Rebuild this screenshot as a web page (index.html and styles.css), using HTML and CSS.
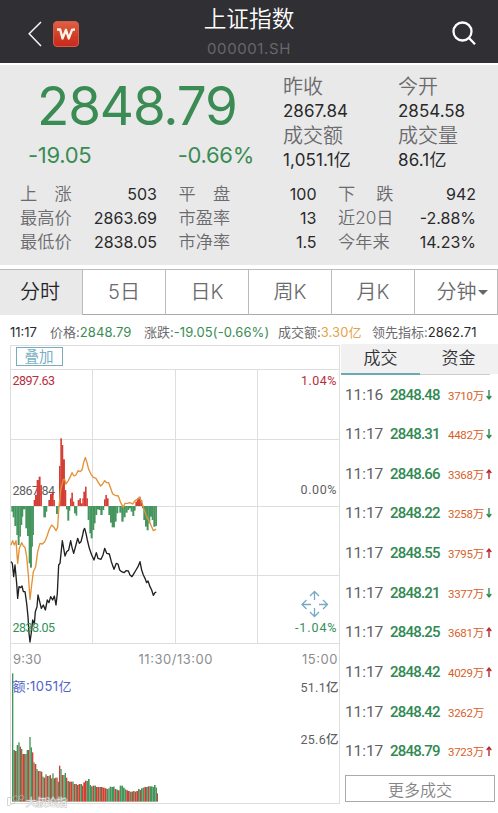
FILE: index.html
```html
<!DOCTYPE html>
<html lang="zh-CN">
<head>
<meta charset="utf-8">
<title>上证指数</title>
<link rel="stylesheet" href="styles.css">
</head>
<body>
<header class="bar">
  <div class="bar-left">
    <svg class="back" viewBox="0 0 14 26"><path d="M13 1 1.2 12.7 13 25"/></svg>
    <svg class="brand" viewBox="0 0 26 26"><defs><linearGradient id="red" x2="0" y2="1"><stop stop-color="#df6146"/><stop offset=".6" stop-color="#d03b25"/><stop offset="1" stop-color="#ca281d"/></linearGradient></defs><rect x=".5" y=".5" width="25" height="25" rx="3.5" fill="url(#red)" stroke="#d55b48"/><path d="M4 8.5H7.2L9.5 17.5 13 8.8 15.7 17.5 19 8.8Q19.5 8.5 22 8.5" fill="none" stroke="#fff4e6" stroke-width="2.3" stroke-linejoin="round"/></svg>
  </div>
  <div class="heading"><h1>上证指数</h1><p>000001.SH</p></div>
  <svg class="search" viewBox="0 0 24 25"><circle cx="10.5" cy="10.5" r="9"/><path d="m17 17 6 6.3"/></svg>
</header>

<section class="quote">
  <div class="top">
    <div class="last">
      <div class="price">2848.79</div>
      <div class="change"><span>-19.05</span><span>-0.66%</span></div>
    </div>
    <dl class="pair"><dt>昨收</dt><dd>2867.84</dd><dt>成交额</dt><dd>1,051.1亿</dd></dl>
    <dl class="pair"><dt>今开</dt><dd>2854.58</dd><dt>成交量</dt><dd>86.1亿</dd></dl>
  </div>
  <div class="stats">
    <dl><dt class="wide"><i>上</i><i>涨</i></dt><dd>503</dd><dt>最高价</dt><dd>2863.69</dd><dt>最低价</dt><dd>2838.05</dd></dl>
    <dl><dt class="wide"><i>平</i><i>盘</i></dt><dd>100</dd><dt>市盈率</dt><dd>13</dd><dt>市净率</dt><dd>1.5</dd></dl>
    <dl><dt class="wide"><i>下</i><i>跌</i></dt><dd>942</dd><dt>近20日</dt><dd>-2.88%</dd><dt>今年来</dt><dd>14.23%</dd></dl>
  </div>
</section>

<nav class="tabs"><b>分时</b><span>5日</span><span>日K</span><span>周K</span><span>月K</span><span class="more-tab">分钟<i></i></span></nav>

<div class="ticker">
  <span class="dark">11:17</span>
  <span>价格:<em>2848.79</em></span>
  <span>涨跌:<em>-19.05(-0.66%)</em></span>
  <span>成交额:<em class="gold">3.30亿</em></span>
  <span class="lead">领先指标:<em class="dark">2862.71</em></span>
</div>

<main class="board">
  <svg class="chart" viewBox="10 344 330 469">
    <path class="grid" d="M10.5 804V345.5H340M10 369.5H340M10 439.5H340M10 506.500H340M10 575.500H340M10 643.500H340M10 803.500H340M339.500 345V804M92.500 370V643M175.500 370V643M257.500 370V643"/>
    <rect class="overlay-box" x="16.500" y="347.500" width="46" height="18"/>
    <text class="overlay-text" x="24.500" y="361.500" textLength="29">叠加</text>
    <text class="axis mid" x="12.500" y="495" textLength="42.500">2867.84</text>
    <g transform="translate(0 420) scale(.33333)">
      <g id="power"></g>
      <polyline class="line orange" points="33,375 38,362 43,375 48,362 53,430 58,385 65,368 70,378 75,382 80,410 85,465 90,538 95,495 100,455 107,440 113,395 120,370 127,372 134,365 140,352 147,330 155,315 162,322 168,332 173,322 176,270 182,210 186,195 190,178 194,178 198,192 205,182 211,170 216,158 222,168 228,165 234,152 240,155 246,150 251,128 256,112 261,128 266,148 273,163 280,172 288,175 295,188 302,198 308,192 314,182 320,188 326,188 332,205 338,222 346,226 355,228 362,248 370,262 375,250 382,250 390,248 398,252 405,242 412,238 419,233 425,245 432,268 440,290 448,305 454,318 460,332 468,328"/>
      <polyline class="line black" points="33,425 37,430 41,470 45,435 50,490 53,535 57,500 62,503 66,498 70,515 75,515 80,550 84,590 87,640 90,666 95,630 98,600 103,612 106,575 111,560 114,525 119,545 124,565 130,555 136,570 142,540 147,548 152,530 158,540 163,528 168,555 172,520 176,435 180,430 187,362 191,385 195,408 200,395 206,390 212,362 216,382 221,400 227,378 233,355 238,370 243,365 248,345 251,330 254,325 258,340 262,360 268,385 275,405 282,420 289,398 294,415 303,418 309,405 314,385 320,400 328,402 334,425 342,448 349,430 354,432 359,450 365,455 372,458 378,452 385,453 390,465 396,470 402,460 408,450 414,440 420,425 425,450 430,465 435,475 440,488 444,483 450,500 455,510 460,526 465,518 469,516"/>
    </g>
    <g id="volume" transform="translate(0 665) scale(.33333)"></g>
    <text class="axis up" x="12.500" y="385" textLength="42.500">2897.63</text>
    <text class="axis up" x="301" y="385" textLength="35.500">1.04%</text>
    <text class="axis mid" x="300.500" y="494" textLength="36">0.00%</text>
    <text class="axis down" x="12.500" y="632" textLength="42.500">2838.05</text>
    <text class="axis down" x="295" y="632" textLength="41.500">-1.04%</text>
    <text class="clock" x="13" y="664" textLength="28.500">9:30</text>
    <text class="clock" x="138.500" y="664" textLength="74">11:30/13:00</text>
    <text class="clock" x="302" y="664" textLength="35.500">15:00</text>
    <text class="total" x="12.500" y="691" textLength="59">额:1051亿</text>
    <text class="axis mid" x="300.500" y="692" textLength="38">51.1亿</text>
    <text class="axis mid" x="300.500" y="743.500" textLength="38">25.6亿</text>
    <path class="move" d="M314.500 600V591.500M310 596l4.500-4.500 4.500 4.500M314.500 608v8.500M310 612l4.500 4.500 4.500-4.500M311 604.500H302M306.500 600l-4.500 4.500 4.500 4.500M319 604.500h8.500M323 600l4.500 4.500-4.500 4.500"/>
    <g class="mark"><path d="M8 797.500h5M7.500 797.500v8h2l2-1.500q4 0 4-3"/><circle cx="16" cy="798.500" r="2.800"/><circle cx="21.500" cy="797.500" r="2.300"/><text x="26" y="805.500" textLength="41">大叔论指</text></g>
  </svg>

  <aside class="trades">
    <div class="trade-tabs"><b>成交</b><span>资金</span></div>
    <ul>
      <li><time>11:16</time><b>2848.48</b><span>3710万</span><svg class="dn" viewBox="0 0 6 10"><path d="M3 0V9M.7 6 3 8.800 5.300 6"/></svg></li>
      <li><time>11:17</time><b>2848.31</b><span>4482万</span><svg class="dn" viewBox="0 0 6 10"><path d="M3 0V9M.7 6 3 8.800 5.300 6"/></svg></li>
      <li><time>11:17</time><b>2848.66</b><span>3368万</span><svg class="rise" viewBox="0 0 6 10"><path d="M3 10V1M.7 4 3 1.200 5.300 4"/></svg></li>
      <li><time>11:17</time><b>2848.22</b><span>3258万</span><svg class="dn" viewBox="0 0 6 10"><path d="M3 0V9M.7 6 3 8.800 5.300 6"/></svg></li>
      <li><time>11:17</time><b>2848.55</b><span>3795万</span><svg class="rise" viewBox="0 0 6 10"><path d="M3 10V1M.7 4 3 1.200 5.300 4"/></svg></li>
      <li><time>11:17</time><b>2848.21</b><span>3377万</span><svg class="dn" viewBox="0 0 6 10"><path d="M3 0V9M.7 6 3 8.800 5.300 6"/></svg></li>
      <li><time>11:17</time><b>2848.25</b><span>3681万</span><svg class="rise" viewBox="0 0 6 10"><path d="M3 10V1M.7 4 3 1.200 5.300 4"/></svg></li>
      <li><time>11:17</time><b>2848.42</b><span>4029万</span><svg class="rise" viewBox="0 0 6 10"><path d="M3 10V1M.7 4 3 1.200 5.300 4"/></svg></li>
      <li><time>11:17</time><b>2848.42</b><span>3262万</span></li>
      <li><time>11:17</time><b>2848.79</b><span>3723万</span><svg class="rise" viewBox="0 0 6 10"><path d="M3 10V1M.7 4 3 1.200 5.300 4"/></svg></li>
    </ul>
    <button class="more">更多成交</button>
  </aside>
</main>
<script src="chart.js"></script>
</body>
</html>
```
FILE: styles.css
```css
* { box-sizing: border-box; margin: 0; padding: 0; }
body { width: 498px; height: 813px; overflow: hidden; background: #fff; color: #6b6b6e; font-family: Inter, "Noto Sans CJK SC", sans-serif; font-weight: 400; }
i, em { font-style: normal; }
.bar { height: 62.500px; background: #302f34; display: grid; grid-template-columns: 150px 1fr 150px; align-items: start; }
.bar-left { display: flex; align-items: center; gap: 11px; padding: 21px 0 0 28px; }
.back { width: 14px; height: 26px; fill: none; stroke: #f5f5f7; stroke-width: 1.500; }
.brand { width: 26px; height: 26px; }
.heading { text-align: center; }
.heading h1 { font: 350 22.700px/30px "Noto Sans CJK SC", sans-serif; color: #fff; padding-top: 3px; }
.heading p { font-size: 15px; line-height: 20px; margin-top: 6px; color: #67676d; letter-spacing: .6px; }
.search { width: 24px; height: 25px; margin: 20.500px 0 0 104px; fill: none; stroke: #fff; stroke-width: 2.300; }

.quote { margin-top: 2.500px; height: 200px; background: #e9e9e9; }
.top { display: grid; grid-template-columns: 283px 115px 1fr; height: 116.500px; }
.price { font-size: 53px; line-height: 60px; padding: 11px 0 0 37px; color: #3a8c54; letter-spacing: -1.150px; white-space: nowrap; }
.change { display: flex; justify-content: space-between; padding: 6px 29px 0 28px; font-size: 22px; line-height: 26px; letter-spacing: -.3px; color: #3a8c54; }
.pair { padding-top: 10px; }
.pair dt { font-size: 20px; line-height: 24px; font-weight: 350; }
.pair dd { font-size: 17px; line-height: 25px; color: #29292b; white-space: nowrap; }
.pair dd:last-child { letter-spacing: .15px; }
.stats { display: grid; grid-template-columns: 137px 138px 138px; column-gap: 21.500px; padding-left: 20px; }
.stats dl { display: grid; grid-template-columns: auto auto; grid-auto-rows: 24px; justify-content: space-between; line-height: 24px; }
.stats dt { font-size: 17.200px; font-weight: 350; }
.stats dd { font-size: 16px; text-align: right; color: #29292b; }
.wide { display: flex; justify-content: space-between; }

.tabs { margin-top: 4px; height: 46px; display: grid; grid-template-columns: repeat(6, 83px); border-top: 1.500px solid #bcbcbe; border-bottom: 1px solid #aaa; font-size: 20px; line-height: 45px; text-align: center; }
.tabs > * { border-right: 1px solid #bbb; font-weight: 350; }
.tabs > b { background: #e9e9e9; color: #252527; padding-right: 2px; }
.more-tab { display: flex; justify-content: center; align-items: center; gap: 1px; padding-left: 12px; }
.more-tab i { border: 5px solid transparent; border-top: 5px solid #66666d; border-bottom: 0; }

.ticker { height: 29px; padding: 7px 0 0 10px; display: grid; grid-template-columns: 40px 94px 134px 94px auto; font-size: 13px; line-height: 20px; white-space: nowrap; }
.ticker em { color: #3a8c54; letter-spacing: .1px; }
.ticker .gold { color: #e5a44c; }
.ticker .dark { color: #29292b; }

.board { display: grid; grid-template-columns: 340px 1fr; height: 469px; }
.chart { width: 330px; height: 469px; margin-left: 10px; overflow: visible; }
.grid { fill: none; stroke: #dedede; }
.overlay-box { fill: #fff; stroke: #79adbd; }
.overlay-text { font-size: 14.500px; fill: #79b0c3; }
.axis { font: 450 12.500px Roboto, "Noto Sans CJK SC", sans-serif; }
.up { fill: #b92d3a; }
.mid { fill: #606063; }
.down { fill: #329158; }
.clock { font-size: 13px; fill: #8d8d91; }
.total { font-size: 13px; fill: #5162c8; }
.line { fill: none; stroke-width: 4; stroke-linejoin: round; }
.orange { stroke: #e39238; }
.black { stroke: #202020; }
.red { fill: #d43d33; }
.green { fill: #43955d; }
.move { fill: none; stroke: #78aac1; stroke-width: 1.300; }
.mark { fill: none; stroke: #bbb; stroke-width: .8; opacity: .75; }
.mark text { font-size: 10.500px; font-weight: 350; fill: #fff; stroke-width: 1.200; paint-order: stroke; }

.trades { margin-left: 1px; }
.trade-tabs { display: grid; grid-template-columns: 79px 70px 1fr; height: 30px; background: #f1f1f1; font-size: 17px; line-height: 29px; text-align: center; color: #303033; }
.trade-tabs b { border-bottom: 2px solid #6ca9b7; font-weight: 350; }
.trade-tabs span { border-bottom: 1px solid #ccc; padding-left: 7px; font-weight: 350; white-space: nowrap; }
.trades ul { list-style: none; height: 397px; display: grid; grid-template-rows: repeat(10, 39.670px); }
.trades li { display: grid; grid-template-columns: 45px 58px 37px 8px; padding-left: 4px; height: 41px; align-items: center; font-family: Roboto, "Noto Sans CJK SC", sans-serif; white-space: nowrap; }
.trades time { font-size: 15.500px; letter-spacing: -.1px; color: #606063; }
.trades li b { font-size: 15px; font-weight: 500; letter-spacing: -.8px; color: #308951; }
.trades li span { font-size: 11.500px; letter-spacing: -.3px; color: #d85f2b; }
.trades li svg { width: 6px; height: 10px; margin-left: 1px; fill: none; stroke-width: 1.400; }
.trades .dn { stroke: #308951; }
.trades .rise { stroke: #b82a2f; }
.more { display: block; margin: 4px 0 0 4px; width: 150px; height: 27px; background: #fff; border: 1px solid #aaa; color: #858588; font: 350 16px/24px "Noto Sans CJK SC", sans-serif; }
```
FILE: chart.js
```js
// Each pair is a bar's left edge and its end; the baseline separates rises from falls.
const power = "34,275 38,292 43,318 49,345 53,375 58,350 62,315 66,290 69,268 76,325 81,348 86,430 90,443 95,380 98,345 101,240 105,225 110,180 116,170 121,195 125,258 130,292 137,275 141,258 145,240 150,222 155,218 160,240 164,258 168,282 173,262 177,138 181,55 185,75 189,118 194,210 198,268 202,302 207,272 210,235 214,218 218,245 222,280 227,287 231,258 233,240 238,235 242,250 247,235 250,215 255,200 259,235 263,300 268,340 272,355 277,330 282,310 286,285 291,268 296,270 301,285 307,270 312,238 316,225 320,235 325,285 330,308 335,322 344,305 349,280 354,260 358,278 364,305 370,292 376,278 382,270 387,265 392,275 397,288 402,272 406,245 411,235 416,230 421,240 426,265 430,300 435,320 440,331 445,310 450,290 455,300 460,320 466,318 470,258";
const volume = "36,25,g 40,255,g 45,258,r 50,240,g 55,232,g 59,245,r 63,252,g 67,267,r 72,267,g 76,267,r 80,255,g 84,255,r 88,216,g 92,247,g 96,262,r 100,292,g 104,297,r 109,312,g 113,318,r 118,318,g 122,320,r 127,335,g 131,338,r 136,328,g 140,333,r 145,333,g 149,330,r 153,340,g 157,325,g 161,340,r 165,338,g 169,338,r 173,350,g 177,302,r 181,312,g 185,330,r 190,330,g 194,324,g 198,338,r 202,348,g 207,350,r 212,350,r 217,350,g 221,357,r 226,357,g 231,360,r 236,357,r 241,357,g 246,362,r 250,352,r 255,347,r 260,348,g 264,342,g 269,360,g 273,364,g 278,362,r 283,362,g 288,366,r 293,366,r 298,366,g 303,366,r 308,368,r 314,370,r 320,372,g 325,370,g 329,365,g 334,366,g 339,365,g 344,372,r 349,374,g 354,376,r 359,362,g 364,362,g 369,368,g 374,373,g 379,376,r 384,378,r 389,380,g 394,380,r 399,378,g 404,380,r 409,378,r 414,372,g 419,375,r 423,370,g 428,368,g 433,366,r 438,366,g 443,364,r 448,364,g 453,364,g 458,366,g 462,360,g 467,368,g 471,385,r 474,410,g";
const draw = (id, data, base) => {
  const bars = data.split(" ").map(d => d.split(","));
  document.getElementById(id).innerHTML = bars.slice(0, -1).map(([x, y, c], i) => {
    const color = c ? (c === "r" ? "red" : "green") : (y < base ? "red" : "green");
    const width = bars[i + 1][0] - x + (c ? 0 : .8);
    return `<rect class="${color}" x="${x}" y="${Math.min(y, base)}" width="${width}" height="${Math.abs(base - y)}"/>`;
  }).join("");
};
draw("power", power, 258);
draw("volume", volume, 410);
```
